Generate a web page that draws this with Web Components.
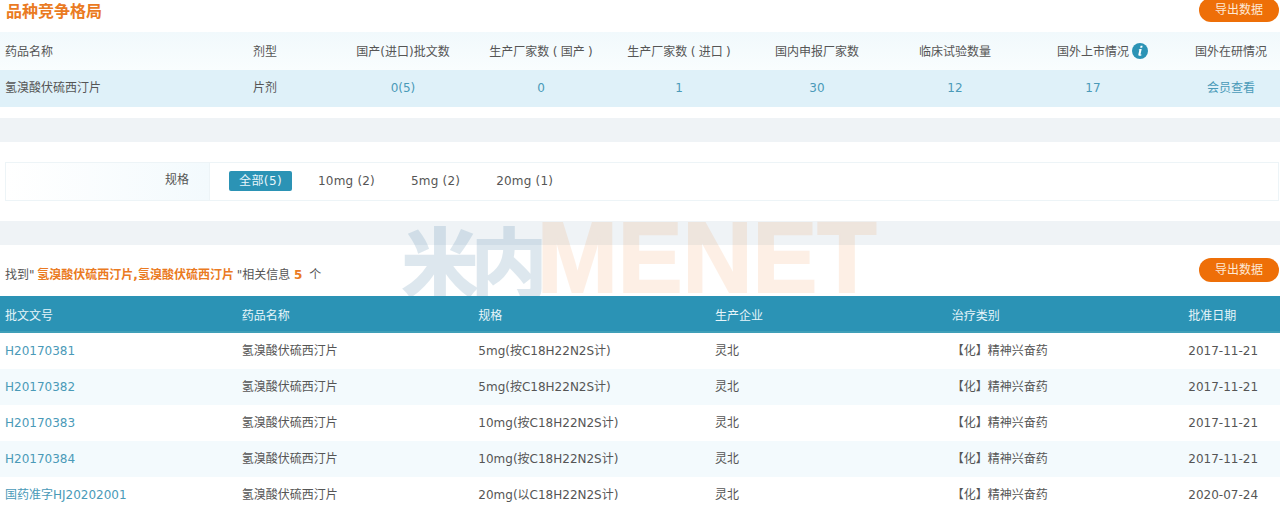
<!DOCTYPE html>
<html lang="zh">
<head>
<meta charset="utf-8">
<title>品种竞争格局</title>
<style>
	html, body {
		margin: 0;
		height: 513px;
		overflow: hidden;
		background: #fff;
	}
	body {
		color: #555;
		font: 12px "DejaVu Sans", "Noto Sans CJK SC", sans-serif;
	}
	main {
		display: block;
		position: relative;
		width: 1280px;
	}
	.link { color: #4a9ab8; }
	.hit { color: #ea7a22; font-weight: bold; margin: 0 -1px 0 -1px; }
	.count { color: #ea7a22; font-weight: bold; margin: 0 3px 0 0; }
</style>
</head>
<body>

<main>
	<section-head heading="品种竞争格局">
		<export-button>导出数据</export-button>
	</section-head>

	<data-row cols="248px 86px repeat(7, 138px)" kind="soft">
		<span>药品名称</span><span>剂型</span><span>国产(进口)批文数</span><span>生产厂家数 ( 国产 )</span><span>生产厂家数 ( 进口 )</span><span>国内申报厂家数</span><span>临床试验数量</span><span>国外上市情况<info-icon></info-icon></span><span>国外在研情况</span>
	</data-row>
	<data-row cols="248px 86px repeat(7, 138px)" kind="tint" height="37">
		<span>氢溴酸伏硫西汀片</span><span>片剂</span><span class="link">0(5)</span><span class="link">0</span><span class="link">1</span><span class="link">30</span><span class="link">12</span><span class="link">17</span><span class="link">会员查看</span>
	</data-row>

	<grey-band style="margin-top:11px"></grey-band>

	<filter-bar label="规格" style="margin-top:20px">
		<filter-chip active>全部(5)</filter-chip>
		<filter-chip>10mg (2)</filter-chip>
		<filter-chip>5mg (2)</filter-chip>
		<filter-chip>20mg (1)</filter-chip>
	</filter-bar>

	<grey-band style="margin-top:20px"></grey-band>

	<result-head>
		<span slot="summary">找到" <span class="hit">氢溴酸伏硫西汀片,氢溴酸伏硫西汀片</span> "相关信息 <span class="count">5</span> 个</span>
		<export-button>导出数据</export-button>
	</result-head>

	<approval-table></approval-table>

	<brand-watermark></brand-watermark>
</main>

<script>
class SectionHead extends HTMLElement {
	constructor() {
		super();
		this.attachShadow({mode:'open'});
		this.shadowRoot.innerHTML = `
			<style>
				:host {
					display: flex;
					justify-content: space-between;
					height: 32px;
					padding: 0 1px 0 6px;
				}
				h2 {
					color: #ea7a22;
					font-size: 16px;
					font-weight: bold;
					line-height: 23px;
					margin: 0;
				}
				::slotted(*) { margin-top: -2px; }
			</style>
			<h2>${this.getAttribute('heading')}</h2>
			<slot></slot>
		`;
	}
}

class ExportButton extends HTMLElement {
	constructor() {
		super();
		this.attachShadow({mode:'open'});
		this.shadowRoot.innerHTML = `
			<style>
				:host {
					background: #ee6f08;
					border-radius: 12px;
					color: #fde9d6;
					display: block;
					height: 24px;
					line-height: 25px;
					text-align: center;
					width: 80px;
				}
			</style>
			<slot></slot>
		`;
	}
}

// sits after the centred label without pushing it, hence the zero width
class InfoIcon extends HTMLElement {
	constructor() {
		super();
		this.attachShadow({mode:'open'});
		this.shadowRoot.innerHTML = `
			<style>
				:host {
					display: inline-block;
					height: 16px;
					vertical-align: -3px;
					width: 0;
				}
				svg {
					display: block;
					transform: translateX(3px);
				}
			</style>
			<svg width="16" height="16" viewBox="0 0 16 16">
				<circle cx="8" cy="8" r="8" fill="#2b93b5"/>
				<path d="M8.600 2.800h2l-.4 1.900h-2zM7.700 6h2l-1.200 5.200c-.1.400.3.500 1 .2l-.2 1c-1.500.7-3.300.5-2.900-1.100l.9-4.100-.8-.1z" fill="#fff"/>
			</svg>
		`;
	}
}

class DataRow extends HTMLElement {
	constructor() {
		super();
		this.attachShadow({mode:'open'});
		this.shadowRoot.innerHTML = `
			<style>
				:host {
					align-items: baseline;
					box-sizing: border-box;
					display: grid;
					grid-template-columns: ${this.getAttribute('cols')};
					height: ${this.getAttribute('height') || 38}px;
					white-space: nowrap;
					word-spacing: -.5px;
				}
				:host([kind="soft"]) {
					background: linear-gradient(#f1f9fc, #f9fdfe);
					padding-top: 11px;
				}
				:host([kind="tint"]) {
					background: #dff1f9;
					padding-top: 10px;
				}
				::slotted(*) {
					line-height: 16px;
					padding-left: 5px;
				}
				::slotted(:nth-child(n+3)) {
					padding-left: 0;
					text-align: center;
				}
			</style>
			<slot></slot>
		`;
	}
}

class GreyBand extends HTMLElement {
	constructor() {
		super();
		this.attachShadow({mode:'open'});
		this.shadowRoot.innerHTML = `
			<style>
				:host {
					background: #eff3f6;
					display: block;
					height: 24px;
				}
			</style>
		`;
	}
}

class FilterBar extends HTMLElement {
	constructor() {
		super();
		this.attachShadow({mode:'open'});
		this.shadowRoot.innerHTML = `
			<style>
				:host {
					border: 1px solid #edf4f7;
					box-sizing: border-box;
					display: flex;
					height: 39px;
					margin: 0 1px 0 5px;
				}
				.label {
					background: linear-gradient(90deg, #fff, #f3fafd);
					border-right: 1px solid #edf4f7;
					box-sizing: border-box;
					line-height: 34px;
					padding-right: 20px;
					text-align: right;
					width: 204px;
				}
				.chips {
					align-items: center;
					display: flex;
					gap: 16px;
					padding: 0 0 2px 19px;
				}
			</style>
			<div class="label">${this.getAttribute('label')}</div>
			<div class="chips"><slot></slot></div>
		`;
	}
}

class FilterChip extends HTMLElement {
	constructor() {
		super();
		this.attachShadow({mode:'open'});
		this.shadowRoot.innerHTML = `
			<style>
				:host {
					border-radius: 2px;
					display: block;
					letter-spacing: .2px;
					line-height: 20px;
					padding: 0 10px;
				}
				:host([active]) {
					background: #2b93b5;
					color: #e8f6fb;
					letter-spacing: .4px;
				}
			</style>
			<slot></slot>
		`;
	}
}

class ResultHead extends HTMLElement {
	constructor() {
		super();
		this.attachShadow({mode:'open'});
		this.shadowRoot.innerHTML = `
			<style>
				:host {
					box-sizing: border-box;
					display: flex;
					height: 51px;
					justify-content: space-between;
					padding: 13px 1px 0 5px;
				}
				.summary {
					line-height: 35px;
				}
			</style>
			<div class="summary"><slot name="summary"></slot></div>
			<slot></slot>
		`;
	}
}

class ApprovalTable extends HTMLElement {
	static heads = ['批文文号', '药品名称', '规格', '生产企业', '治疗类别', '批准日期'];

	static rows = [
		['H20170381', '5mg(按C18H22N2S计)', '2017-11-21'],
		['H20170382', '5mg(按C18H22N2S计)', '2017-11-21'],
		['H20170383', '10mg(按C18H22N2S计)', '2017-11-21'],
		['H20170384', '10mg(按C18H22N2S计)', '2017-11-21'],
		['国药准字HJ20202001', '20mg(以C18H22N2S计)', '2020-07-24']
	];

	constructor() {
		super();
		this.attachShadow({mode:'open'});
		const body = ApprovalTable.rows.map(([code, spec, date], i) => `
			<div class="row ${i % 2 ? 'alt' : ''}">
				<span class="code">${code}</span>
				<span>氢溴酸伏硫西汀片</span>
				<span>${spec}</span>
				<span>灵北</span>
				<span>【化】精神兴奋药</span>
				<span>${date}</span>
			</div>
		`).join('');
		this.shadowRoot.innerHTML = `
			<style>
				:host {
					background: #fff;
					display: block;
					position: relative;
					z-index: 1;
				}
				.row {
					align-items: baseline;
					box-sizing: border-box;
					display: grid;
					grid-template-columns: repeat(5, 236.67px) 1fr;
					height: 36px;
					padding-top: 10px;
					white-space: nowrap;
				}
				.row span {
					line-height: 16px;
					padding-left: 5px;
				}
				.head {
					background: #2b93b5;
					border-bottom: 2px solid #3f9fb8;
					color: #e6f5fa;
					height: 37px;
					padding-top: 12px;
				}
				.alt { background: #f3fafd; }
				.code { color: #4a9ab8; }
			</style>
			<div class="row head">${ApprovalTable.heads.map(h => `<span>${h}</span>`).join('')}</div>
			${body}
		`;
	}
}

class BrandWatermark extends HTMLElement {
	constructor() {
		super();
		this.attachShadow({mode:'open'});
		this.shadowRoot.innerHTML = `
			<style>
				:host {
					display: block;
					height: 75px;
					left: 402px;
					pointer-events: none;
					position: absolute;
					top: 221px;
					width: 490px;
				}
				.wrap {
					align-items: flex-start;
					display: flex;
					white-space: nowrap;
				}
				.cn {
					-webkit-text-stroke: 2px #3c78a0;
					color: #3c78a0;
					font: bold 76px/76px "Noto Sans CJK SC", sans-serif;
					letter-spacing: -7px;
					opacity: .17;
				}
				.en {
					-webkit-text-stroke: 2px #ee781e;
					color: #ee781e;
					font: bold 100px/72px "Liberation Sans", sans-serif;
					margin-left: -3px;
					opacity: .11;
					transform: scaleX(.97);
					transform-origin: left;
				}
			</style>
			<div class="wrap"><span class="cn">米内</span><span class="en">MENET</span></div>
		`;
	}
}

customElements.define('section-head', SectionHead);
customElements.define('export-button', ExportButton);
customElements.define('info-icon', InfoIcon);
customElements.define('data-row', DataRow);
customElements.define('grey-band', GreyBand);
customElements.define('filter-bar', FilterBar);
customElements.define('filter-chip', FilterChip);
customElements.define('result-head', ResultHead);
customElements.define('approval-table', ApprovalTable);
customElements.define('brand-watermark', BrandWatermark);
</script>
</body>
</html>
